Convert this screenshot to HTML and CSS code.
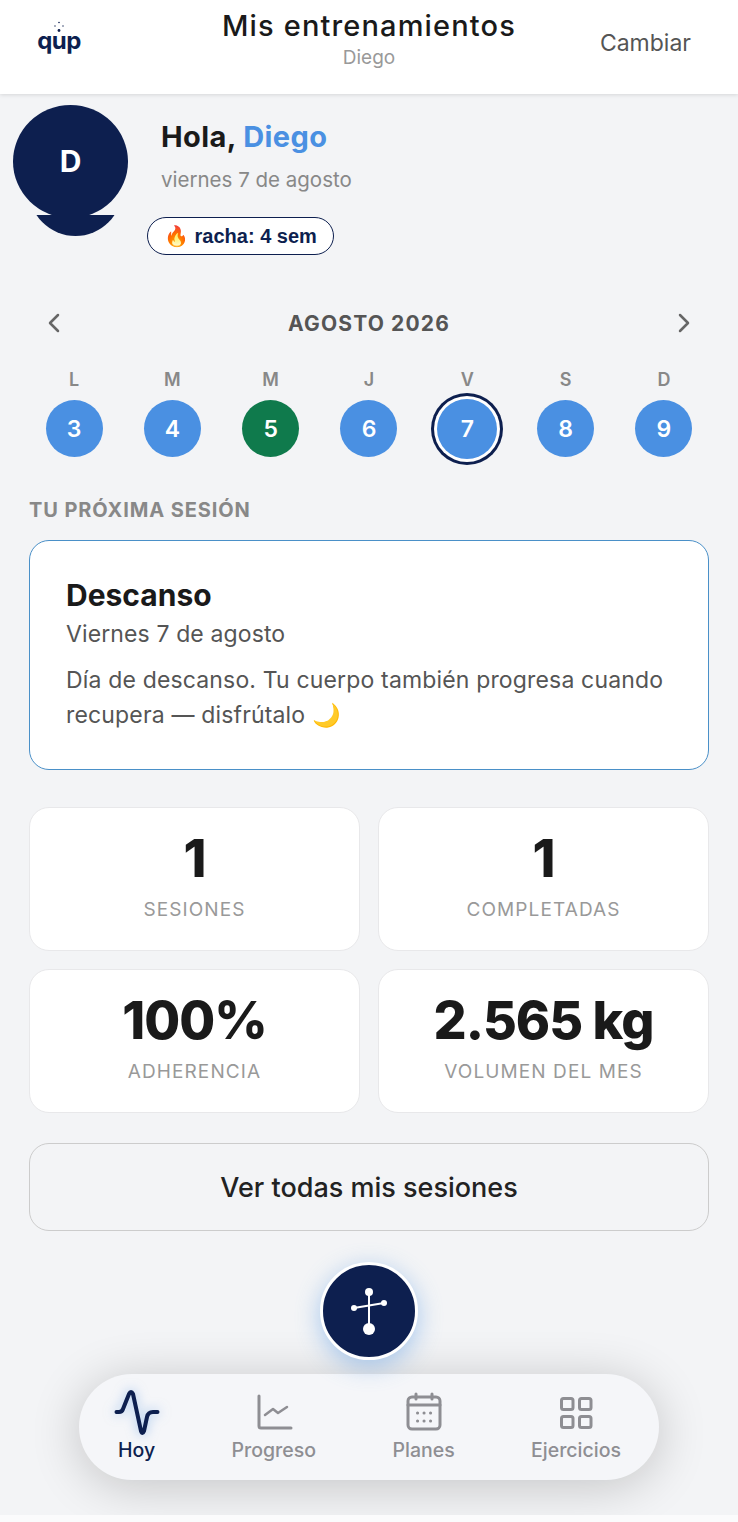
FILE: index.html
```html
<!DOCTYPE html>
<html lang="es">
<head>
  <meta charset="UTF-8" />
  <meta name="viewport" content="width=device-width, initial-scale=1.0"/>
  <title>Mis entrenamientos</title>
  <link rel="stylesheet" href="styles.css">
</head>

<body>
  <div class="app">
    <header class="topbar">
      <div class="logo">
        <svg class="logo-dots" width="12" height="12" viewBox="0 0 12 12">
          <circle cx="6" cy="1.5" r="0.8"/>
          <circle cx="2" cy="5" r="0.7"/>
          <circle cx="10" cy="5" r="0.7"/>
          <circle cx="6" cy="9.5" r="1.4"/>
        </svg>
        <span class="logo-text">qup</span>
      </div>
      <div class="topbar-center">
        <div class="topbar-title">Mis entrenamientos</div>
        <div class="topbar-sub">Diego</div>
      </div>
      <div class="topbar-action">Cambiar</div>
    </header>

    <section class="hero">
      <div class="avatar">D</div>
      <div class="hero-text">
        <div class="hello">Hola, <span class="hello-name">Diego</span></div>
        <div class="hero-date">viernes 7 de agosto</div>
        <div class="streak">🔥 racha: 4 sem</div>
      </div>
    </section>

    <main class="content">
      <div class="month-row">
        <svg width="14" height="20" viewBox="0 0 14 20" class="chev"><path d="M11 2 L3 10 L11 18"/></svg>
        <div class="month">AGOSTO 2026</div>
        <svg width="14" height="20" viewBox="0 0 14 20" class="chev"><path d="M3 2 L11 10 L3 18"/></svg>
      </div>

      <div class="week">
        <div class="day"><span class="day-letter">L</span><span class="day-num">3</span></div>
        <div class="day"><span class="day-letter">M</span><span class="day-num">4</span></div>
        <div class="day"><span class="day-letter">M</span><span class="day-num done">5</span></div>
        <div class="day"><span class="day-letter">J</span><span class="day-num">6</span></div>
        <div class="day"><span class="day-letter">V</span><span class="day-num today">7</span></div>
        <div class="day"><span class="day-letter">S</span><span class="day-num">8</span></div>
        <div class="day"><span class="day-letter">D</span><span class="day-num">9</span></div>
      </div>

      <div class="section-label">TU PRÓXIMA SESIÓN</div>

      <div class="session-card">
        <div class="session-title">Descanso</div>
        <div class="session-date">Viernes 7 de agosto</div>
        <p class="session-text">Día de descanso. Tu cuerpo también progresa cuando recupera — disfrútalo 🌙</p>
      </div>

      <div class="stats">
        <div class="stat"><div class="stat-value">1</div><div class="stat-label">SESIONES</div></div>
        <div class="stat"><div class="stat-value">1</div><div class="stat-label">COMPLETADAS</div></div>
        <div class="stat"><div class="stat-value">100%</div><div class="stat-label">ADHERENCIA</div></div>
        <div class="stat"><div class="stat-value">2.565 kg</div><div class="stat-label">VOLUMEN DEL MES</div></div>
      </div>

      <button class="all-btn" type="button">Ver todas mis sesiones</button>
    </main>

    <!-- floating stuff -->
    <button class="fab" type="button">
      <svg width="50" height="56" viewBox="0 0 50 56">
        <path class="fab-line" d="M25 9 V46 M10 25 L40 20"/>
        <circle cx="25" cy="9" r="4"/>
        <circle cx="25" cy="46" r="6"/>
        <circle cx="10" cy="25" r="3"/>
        <circle cx="40" cy="20" r="3"/>
      </svg>
    </button>

    <nav class="bottom-nav">
      <div class="nav-item active">
        <svg width="48" height="46" viewBox="0 0 48 46" class="nav-icon">
          <path d="M3.500 22 H6 Q9 22 10 19 L16 4 Q18 0 20 4 L28 41 Q29.500 45 31 41 L34 27 Q35 22 40 22 H44.500"/>
        </svg>
        <span>Hoy</span>
      </div>
      <div class="nav-item">
        <svg width="48" height="46" viewBox="0 0 48 46" class="nav-icon">
          <path d="M9 6 V36 Q9 38 11 38 H41"/>
          <path class="thin" d="M15 25 L23 19 L28 23 L37 17"/>
        </svg>
        <span>Progreso</span>
      </div>
      <div class="nav-item">
        <svg width="48" height="46" viewBox="0 0 48 46" class="nav-icon">
          <rect x="8" y="7" width="32" height="32" rx="4"/>
          <path d="M8 15 H40 M16 4 V9 M32 4 V9"/>
          <path class="dots" d="M17.500 23 h0.100 M24 23 h0.100 M30.500 23 h0.100 M17.500 31 h0.100 M24 31 h0.100 M30.500 31 h0.100"/>
        </svg>
        <span>Planes</span>
      </div>
      <div class="nav-item">
        <svg width="48" height="46" viewBox="0 0 48 46" class="nav-icon">
          <rect x="9.500" y="8.500" width="11.500" height="11" rx="2"/>
          <rect x="27.500" y="8.500" width="11.500" height="11" rx="2"/>
          <rect x="9.500" y="26.500" width="11.500" height="11" rx="2"/>
          <rect x="27.500" y="26.500" width="11.500" height="11" rx="2"/>
        </svg>
        <span>Ejercicios</span>
      </div>
    </nav>
  </div>
</body>
</html>
```

FILE: styles.css
```css
* {
  box-sizing: border-box;
}

body {
  margin: 0;
  padding: 0;
  font-family: 'Inter', 'Liberation Sans', sans-serif;
  background: #f3f4f6;
  color: #1a1a1a;
}

.app {
  position: relative;
  height: 1522px;
  overflow: hidden;
  background: #f3f4f6;
}

/* white strip under the nav */
.app::after {
  content: "";
  position: absolute;
  left: 0;
  right: 0;
  bottom: 0;
  height: 7px;
  background: #fbfbfc;
  z-index: 3;
}

/* top bar */
.topbar {
  height: 94px;
  background: #fff;
  box-shadow: 0 1px 4px rgba(0, 0, 0, 0.12);
  display: grid;
  grid-template-columns: 1fr auto 1fr;
  align-items: start;
  padding: 0 37px;
}

.logo {
  width: 44px;
  margin-top: 21px;
  display: flex;
  flex-direction: column;
  align-items: center;
  color: #0d1f4f;
}

.logo-dots {
  fill: #0d1f4f;
  margin-bottom: -3px;
}

.logo-text {
  font-size: 24px;
  font-weight: 700;
  line-height: 22px;
  letter-spacing: -0.5px;
}

.topbar-center {
  text-align: center;
  padding-top: 9px;
}

.topbar-title {
  font-size: 29px;
  font-weight: 500;
  line-height: 34px;
  letter-spacing: 1.150px;
}

.topbar-sub {
  font-size: 19px;
  line-height: 26px;
  margin-top: 2px;
  color: #999;
}

.topbar-action {
  justify-self: end;
  font-size: 23px;
  line-height: 28px;
  margin: 29px 10px 0 0;
  color: #555;
}

/* greeting */
.hero {
  display: flex;
  padding: 11px 0 0 13px;
  height: 196px;
}

.avatar {
  position: relative;
  width: 115px;
  height: 113px;
  border-radius: 50%;
  background: #0d1f4f;
  color: #fff;
  font-size: 30px;
  font-weight: 700;
  display: flex;
  align-items: center;
  justify-content: center;
  padding-bottom: 2px;
  flex-shrink: 0;
}

.avatar::after {
  content: "";
  position: absolute;
  left: 22px;
  top: 110px;
  width: 81px;
  height: 21px;
  background: #0d1f4f;
  clip-path: circle(46.700px at 40.500px -25.700px);
}

.hero-text {
  margin-left: 33px;
  padding-top: 14px;
}

.hello {
  font-size: 29px;
  font-weight: 700;
  line-height: 35px;
  letter-spacing: 0.4px;
}

.hello-name {
  color: #4a90e2;
}

.hero-date {
  font-size: 20.500px;
  line-height: 28px;
  color: #888;
  margin-top: 12px;
}

.streak {
  display: inline-flex;
  align-items: center;
  margin: 23px 0 0 -14px;
  height: 38px;
  padding: 0 16px;
  border: 1.5px solid #0d1f4f;
  border-radius: 19px;
  background: #fff;
  color: #0d1f4f;
  font-family: 'Liberation Sans', sans-serif;
  font-size: 20px;
  font-weight: 700;
}

/* content */
.content {
  padding: 0 29px;
}

.month-row {
  display: flex;
  align-items: center;
  justify-content: space-between;
  padding: 0 18px;
  height: 26px;
  margin-top: 20px;
}

.chev {
  fill: none;
  stroke: #666;
  stroke-width: 2.5;
  stroke-linecap: round;
  stroke-linejoin: round;
}

.month {
  font-size: 21px;
  font-weight: 700;
  letter-spacing: 1.150px;
  color: #555;
}

.week {
  display: flex;
  justify-content: space-between;
  padding: 0 16px;
  margin-top: 33px;
}

.day {
  width: 58px;
  display: flex;
  flex-direction: column;
  align-items: center;
}

.day-letter {
  font-size: 18px;
  font-weight: 600;
  line-height: 22px;
  color: #888;
}

.day-num {
  width: 57px;
  height: 57px;
  margin-top: 9px;
  border-radius: 50%;
  background: #4a90e2;
  color: #fff;
  font-size: 23px;
  font-weight: 600;
  display: flex;
  align-items: center;
  justify-content: center;
}

.day-num.done {
  background: #0f7a4c;
}

.day-num.today {
  width: 60px;
  height: 60px;
  margin: 8px -1px -1px;
  flex-shrink: 0;
  box-shadow: 0 0 0 3px #fff, 0 0 0 6px #0d1f4f;
}

.section-label {
  font-size: 20px;
  font-weight: 700;
  letter-spacing: 0.900px;
  line-height: 26px;
  color: #888;
  margin-top: 39px;
}

.session-card {
  margin-top: 17px;
  height: 230px;
  background: #fff;
  border: 1.5px solid #4a90c8;
  border-radius: 20px;
  padding: 35px 36px 0;
}

.session-title {
  font-size: 30px;
  font-weight: 700;
  line-height: 38px;
}

.session-date {
  font-size: 23px;
  line-height: 30px;
  letter-spacing: 0.120px;
  color: #555;
  margin-top: 5px;
}

.session-text {
  font-size: 23px;
  line-height: 35px;
  letter-spacing: 0.160px;
  color: #555;
  margin: 14px 0 0;
}

.stats {
  display: grid;
  grid-template-columns: 1fr 1fr;
  gap: 18px;
  margin-top: 37px;
}

.stat {
  height: 144px;
  background: #fff;
  border: 1px solid #e8e8ea;
  border-radius: 20px;
  text-align: center;
  padding-top: 20px;
}

.stat-value {
  font-size: 52px;
  font-weight: 800;
  line-height: 62px;
  letter-spacing: -1px;
  color: #1a1a1a;
}

.stat-label {
  font-size: 19px;
  line-height: 26px;
  letter-spacing: 1.100px;
  color: #999;
  margin-top: 7px;
}

.all-btn {
  display: block;
  width: 100%;
  height: 88px;
  margin-top: 30px;
  background: #f3f4f6;
  border: 1.5px solid #ccc;
  border-radius: 20px;
  font-family: inherit;
  font-size: 27px;
  font-weight: 500;
  color: #222;
}

/* floating button and nav */
.fab {
  position: absolute;
  left: 320px;
  top: 1262px;
  width: 98px;
  height: 98px;
  border-radius: 50%;
  border: 3px solid #fff;
  background: #0d1f4f;
  box-shadow: 0 6px 24px rgba(74, 144, 226, 0.45);
  display: flex;
  align-items: center;
  justify-content: center;
  padding: 0;
  z-index: 2;
}

.fab svg {
  fill: #fff;
}

.fab-line {
  fill: none;
  stroke: #fff;
  stroke-width: 2;
}

.bottom-nav {
  position: absolute;
  left: 79px;
  top: 1374px;
  width: 580px;
  height: 106px;
  border-radius: 53px;
  background: #f5f6f9;
  box-shadow: 0 6px 50px rgba(0, 0, 0, 0.2);
  display: flex;
  justify-content: space-between;
  padding: 16px 38px 0 39px;
  z-index: 1;
}

.nav-item {
  display: flex;
  flex-direction: column;
  align-items: center;
  font-size: 19.500px;
  font-weight: 500;
  line-height: 26px;
  color: #8e8e93;
}

.nav-icon {
  fill: none;
  stroke: #8e8e93;
  stroke-width: 3;
  stroke-linecap: round;
  stroke-linejoin: round;
  margin: 0 -12px 1px;
}

.nav-icon .thin {
  stroke-width: 2.5;
}

.nav-icon .dots {
  stroke-width: 3;
}

.nav-item.active {
  color: #0d1f4f;
}

.nav-item.active .nav-icon {
  stroke: #0d1f4f;
  stroke-width: 4;
  filter: drop-shadow(0 0 6px rgba(74, 144, 226, 0.5));
}
```
